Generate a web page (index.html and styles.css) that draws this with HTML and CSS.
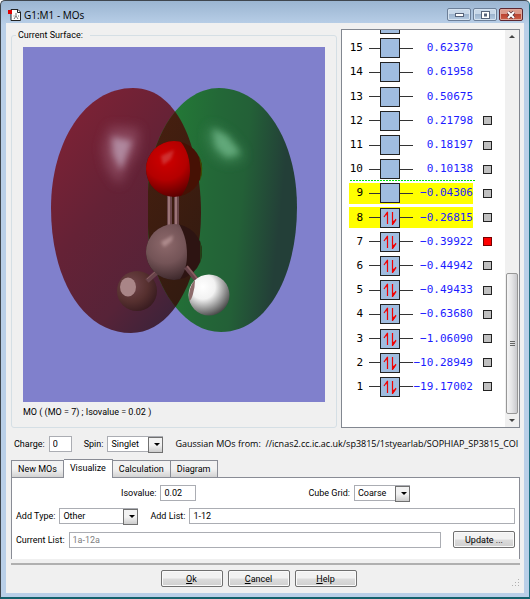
FILE: index.html
```html
<!DOCTYPE html>
<html lang="en">
<head>
    <meta charset="utf-8">
    <meta name="viewport" content="width=device-width, initial-scale=1.0">
    <title>G1:M1 - MOs</title>
    <link rel="stylesheet" href="styles.css">
</head>
<body>
<div class="window">
    <header class="titlebar">
        <svg class="app-icon" width="14" height="14" viewBox="0 0 14 14" aria-hidden="true">
            <path d="M3 1.500h7l2.500 2.500v8.500H3z" fill="#fff" stroke="#222"/>
            <path d="M9.500 1.500v3h3" fill="none" stroke="#222"/>
            <path d="M8 5v3M8 8l-2 3M8 8l2 3M5.500 8h1M10 8h1" stroke="#777" fill="none"/>
            <rect x="0" y="2" width="4" height="4" fill="#e00000"/>
        </svg>
        <h1>G1:M1 - MOs</h1>
        <div class="window-buttons">
            <button type="button" aria-label="Minimize">
                <svg width="9" height="5" viewBox="0 0 9 5"><rect x=".5" y="1.500" width="8" height="3" fill="#fff" stroke="#56637a"/></svg>
            </button>
            <button type="button" aria-label="Maximize">
                <svg width="9" height="8" viewBox="0 0 9 8"><rect x=".5" y=".5" width="8" height="7" fill="#fff" stroke="#56637a"/><rect x="3.500" y="3" width="2" height="2" fill="#9fb5cf" stroke="#56637a"/></svg>
            </button>
            <button type="button" class="close" aria-label="Close">
                <svg width="10" height="8" viewBox="0 0 10 8"><path d="M2 1l6 6M8 1l-6 6" stroke="#5b3038" stroke-width="3.400"/><path d="M2 1l6 6M8 1l-6 6" stroke="#fff" stroke-width="2"/></svg>
            </button>
        </div>
    </header>

    <main class="client">
        <div class="top">
            <fieldset class="surface">
                <legend>Current Surface:</legend>
                <svg class="canvas" viewBox="0 0 302 355" role="img" aria-label="Orbital surface">
                    <defs>
                        <linearGradient id="redLobe" x1=".1" y1=".1" x2=".75" y2="1">
                            <stop offset="0" stop-color="#7d2235"/>
                            <stop offset=".4" stop-color="#652236"/>
                            <stop offset=".75" stop-color="#572338"/>
                            <stop offset="1" stop-color="#3b233a"/>
                        </linearGradient>
                        <linearGradient id="greenLobe" x1=".1" y1=".1" x2=".98" y2=".25">
                            <stop offset="0" stop-color="#237d36"/>
                            <stop offset=".4" stop-color="#236837"/>
                            <stop offset=".65" stop-color="#236037"/>
                            <stop offset=".95" stop-color="#233f38"/>
                        </linearGradient>
                        <linearGradient id="shared" x1="0" y1="0" x2="1" y2="1">
                            <stop offset="0" stop-color="#4a200f"/>
                            <stop offset=".5" stop-color="#351b10"/>
                            <stop offset="1" stop-color="#251a12"/>
                        </linearGradient>
                        <radialGradient id="oxygen" cx=".35" cy=".32" r=".75">
                            <stop offset="0" stop-color="#d00000"/>
                            <stop offset=".5" stop-color="#b40000"/>
                            <stop offset="1" stop-color="#4c0000"/>
                        </radialGradient>
                        <radialGradient id="carbon" cx=".35" cy=".35" r=".7">
                            <stop offset="0" stop-color="#8d696b"/>
                            <stop offset=".5" stop-color="#745457"/>
                            <stop offset="1" stop-color="#392528"/>
                        </radialGradient>
                        <radialGradient id="hydrogenLeft" cx=".35" cy=".35" r=".7">
                            <stop offset="0" stop-color="#71464b"/>
                            <stop offset=".6" stop-color="#56302f"/>
                            <stop offset="1" stop-color="#391c20"/>
                        </radialGradient>
                        <radialGradient id="hydrogenRight" cx=".35" cy=".3" r=".75">
                            <stop offset="0" stop-color="#ffffff"/>
                            <stop offset=".4" stop-color="#f2f2f2"/>
                            <stop offset="1" stop-color="#464646"/>
                        </radialGradient>
                        <clipPath id="redClip"><path d="M110 41C158 41 178 108 178 166C178 230 150 286 108 286C60 286 28 232 28 161C28 95 62 41 110 41Z"/></clipPath>
                        <clipPath id="oxygenClip"><path d="M110 85H149C162 97 167 108 167 124C167 138 159 148 156 152H110Z"/></clipPath>
                        <clipPath id="carbonClip"><path d="M110 170H152C161 184 164 194 164 208C164 222 159 231 151 240H110Z"/></clipPath>
                        <filter id="soft" x="-50%" y="-50%" width="200%" height="200%"><feGaussianBlur stdDeviation="6"/></filter>
                        <filter id="softer" x="-50%" y="-50%" width="200%" height="200%"><feGaussianBlur stdDeviation="3"/></filter>
                        <filter id="glint" x="-50%" y="-50%" width="200%" height="200%"><feGaussianBlur stdDeviation="1.500"/></filter>
                    </defs>
                    <rect width="302" height="355" fill="#8080cc"/>
                    <!-- lobes -->
                    <path d="M110 41C158 41 178 108 178 166C178 230 150 286 108 286C60 286 28 232 28 161C28 95 62 41 110 41Z" fill="url(#redLobe)"/>
                    <path d="M196 41C240 41 274 92 274 160C274 232 242 285 198 285C154 285 125 225 125 180V145C125 95 155 41 196 41Z" fill="url(#greenLobe)"/>
                    <g clip-path="url(#redClip)">
                        <path d="M196 41C240 41 274 92 274 160C274 232 242 285 198 285C154 285 125 225 125 180V145C125 95 155 41 196 41Z" fill="url(#shared)"/>
                    </g>
                    <path d="M87 80L116 82L114 103L104 121L96 138L84 120L80 100Z" fill="#96566d" opacity=".7" filter="url(#soft)"/>
                    <path d="M89 90L109 94L104 108L98 123L90 107Z" fill="#b998ae" opacity=".8" filter="url(#softer)"/>
                    <path d="M188 78L205 88L218 103L220 112L203 115L192 108L184 90Z" fill="#468f5d" opacity=".8" filter="url(#soft)"/>
                    <path d="M190 82L204 89L217 106L204 110L193 100Z" fill="#6bb183" opacity=".8" filter="url(#softer)"/>
                    <!-- molecule -->
                    <circle cx="151" cy="122" r="28" fill="#461104"/>
                    <path d="M176 109Q182 121 177 134L178 122Z" fill="#3e4b04"/>
                    <circle cx="151" cy="205" r="28" fill="#2d1412"/>
                    <path d="M177 194Q181 205 177 216Z" fill="#243e16"/>
                    <path d="M146.500 148v30M153.500 148v30" stroke="#6a4549" stroke-width="5"/>
                    <path d="M146 148v30M153 148v30" stroke="#ad8587" stroke-width="1.500"/>
                    <g clip-path="url(#oxygenClip)"><circle cx="151" cy="122" r="28" fill="url(#oxygen)"/></g>
                    <path d="M138 109L151 103L148 112L140 118Z" fill="#d05050" opacity=".6" filter="url(#glint)"/>
                    <circle cx="114" cy="244" r="20" fill="url(#hydrogenLeft)"/>
                    <ellipse cx="105" cy="240" rx="8" ry="9.500" fill="#a98587"/>
                    <path d="M124 234l10-9" stroke="#67434a" stroke-width="5"/>
                    <path d="M124 232l9-8" stroke="#8b6062" stroke-width="1"/>
                    <g clip-path="url(#carbonClip)"><circle cx="151" cy="205" r="28" fill="url(#carbon)"/></g>
                    <path d="M138 195L150 188L149 194L141 200Z" fill="#c5a2a3" opacity=".6" filter="url(#glint)"/>
                    <path d="M163 220l14 17" stroke="#67434a" stroke-width="5"/>
                    <path d="M164 219l13 16" stroke="#8b6062" stroke-width="1.500"/>
                    <circle cx="186" cy="248" r="20.500" fill="url(#hydrogenRight)"/>
                    <path d="M172 233Q165 240 166 254Q168 254 170 247Q172 240 172 233Z" fill="#8d6c6c"/>
                </svg>
                <p class="caption">MO ( (MO = 7) ; Isovalue = 0.02 )</p>
            </fieldset>

            <section class="mo-list" aria-label="Molecular orbitals">
                <div class="levels" id="levels"></div>
                <div class="scrollbar" aria-hidden="true">
                    <span class="arrow-up"></span>
                    <span class="thumb"><i></i><i></i><i></i></span>
                    <span class="arrow-down"></span>
                </div>
            </section>
        </div>

        <div class="row status">
            <label for="charge">Charge:</label>
            <input type="text" id="charge" class="charge" value="0">
            <label for="spin" class="second">Spin:</label>
            <span class="select small">
                <select id="spin"><option>Singlet</option></select>
            </span>
            <span class="path">Gaussian MOs from:&nbsp; //icnas2.cc.ic.ac.uk/sp3815/1styearlab/SOPHIAP_SP3815_COI</span>
        </div>

        <div class="tabs" role="tablist">
            <button type="button" role="tab">New MOs</button>
            <button type="button" role="tab" class="active" aria-selected="true">Visualize</button>
            <button type="button" role="tab">Calculation</button>
            <button type="button" role="tab">Diagram</button>
        </div>
        <div class="tab-panel" role="tabpanel">
            <div class="row centered">
                <div class="row">
                    <label for="isovalue">Isovalue:</label>
                    <input type="text" id="isovalue" class="isovalue" value="0.02">
                </div>
                <div class="row">
                    <label for="cube-grid">Cube Grid:</label>
                    <span class="select small">
                        <select id="cube-grid"><option>Coarse</option></select>
                    </span>
                </div>
            </div>
            <div class="row">
                <label for="add-type">Add Type:</label>
                <span class="select medium">
                    <select id="add-type"><option>Other</option></select>
                </span>
                <label for="add-list" class="second">Add List:</label>
                <input type="text" id="add-list" class="grow" value="1-12">
            </div>
            <div class="row">
                <label for="current-list">Current List:</label>
                <input type="text" id="current-list" class="grow" value="1a-12a" disabled>
                <button type="button" class="push update">Update ...</button>
            </div>
        </div>

        <footer class="actions">
            <div class="action-buttons">
                <button type="button" class="push"><u>O</u>k</button>
                <button type="button" class="push"><u>C</u>ancel</button>
                <button type="button" class="push"><u>H</u>elp</button>
            </div>
            <svg class="grip" width="8" height="8" viewBox="0 0 8 8" aria-hidden="true">
                <path d="M6 0h1v1h-1zM3 3h1v1h-1zM6 3h1v1h-1zM0 6h1v1h-1zM3 6h1v1h-1zM6 6h1v1h-1z" fill="#b0b0b0"/>
            </svg>
        </footer>
    </main>
</div>
<script src="main.js"></script>
</body>
</html>
```

FILE: styles.css
```css
* { box-sizing: border-box; }

body {
    margin: 0;
    font-family: Roboto, "Liberation Sans", sans-serif;
    font-size: 9px;
    line-height: 12px;
    color: #000;
}
button, input, select { font: inherit; color: inherit; margin: 0; }

.window {
    min-height: 100vh;
    display: flex;
    flex-direction: column;
    padding: 0 5px 4px;
    background: linear-gradient(#9bb5d1, #b9cfe8 24px);
    border: 1px solid #3f464e;
    border-right-color: #1b6f80;
    border-bottom: 2px solid #14616c;
    border-radius: 5px 5px 0 0;
}

/* Title bar */
.titlebar {
    display: flex;
    align-items: center;
    height: 22px;
    padding: 5px 1px 0 2px;
}
.titlebar h1 {
    flex: 1;
    margin: 0 0 0 2px;
    font: 10px/16px "Open Sans", "Noto Sans", sans-serif;
}
.window-buttons { display: flex; gap: 2px; }
.window-buttons button {
    display: flex;
    align-items: center;
    justify-content: center;
    width: 24px;
    height: 13px;
    padding: 0;
    border: 1px solid #6c7f98;
    border-radius: 2px;
    background: linear-gradient(#c8d8e9 45%, #9db4ce 50%, #b5cbe2);
    box-shadow: inset 0 0 0 1px #d6e3f0;
}
.window-buttons .close {
    border-color: #5d2730;
    background: linear-gradient(#dc9a8b 45%, #bb4432 50%, #cd6048);
    box-shadow: inset 0 0 0 1px #e0a79b;
}

/* Client area */
.client {
    flex: 1;
    padding: 6px 4px 0 5px;
    background: #f0f0f0;
}
.top {
    display: grid;
    grid-template-columns: minmax(0, 1fr) 179px;
    gap: 4px;
}
.surface {
    min-width: 0;
    margin: 0;
    padding: 6px 11px 9px;
    border: 1px solid #d5dfe5;
    border-radius: 3px;
}
.surface legend {
    margin-left: -7px;
    padding: 0 7px 0 2px;
}
.canvas { display: block; width: 100%; }
.caption { margin: 4px 0 0; }

.mo-list {
    display: flex;
    min-height: 0;
    overflow: hidden;
    background: #fff;
    border: 1px solid #828790;
}
.levels {
    flex: 1;
    display: flex;
    flex-direction: column;
    margin-top: -18px;
    padding: 0 0 28px 7px;
    font: 11px/20px "DejaVu Sans Mono", monospace;
}
.level-row {
    position: relative;
    flex: 1;
    display: flex;
    align-items: center;
    gap: 10px;
}
.level {
    display: flex;
    align-items: center;
    width: 124px;
    height: 21px;
}
.level.highlight { background: #ff0; }
.level-row.gap-line::after {
    content: "";
    position: absolute;
    left: 1px;
    bottom: 0;
    width: 126px;
    height: 1px;
    background: repeating-linear-gradient(90deg, #00e000 0 2px, #fff 2px 3px);
}
.number { width: 14px; text-align: right; }
.line { width: 11px; height: 1px; background: #333; }
.number + .line { margin-left: 6px; }
.box {
    width: 20px;
    height: 20px;
    border: 1px solid #222;
    background: #a0bde0;
}
.box svg { display: block; }
.box + .line { width: 13px; }
.energy {
    flex: 1;
    display: flex;
    justify-content: flex-end;
    min-width: 0;
    color: #1c1cff;
}
.level-row input {
    appearance: none;
    width: 9px;
    height: 9px;
    border: 1px solid #222;
    background: #c0c0c0;
}
.level-row input:checked { background: #f00; border-color: #700; }

.scrollbar {
    display: flex;
    flex-direction: column;
    align-items: center;
    width: 14px;
    padding: 5px 1px;
    background: #f0f0f0;
}
.arrow-up, .arrow-down {
    border: 3px solid transparent;
    border-top: 0;
    border-bottom-color: #444;
}
.arrow-down {
    border-top: 3px solid #444;
    border-bottom: 0;
    margin-top: 5px;
}
.thumb {
    display: flex;
    flex-direction: column;
    align-items: center;
    justify-content: center;
    gap: 1px;
    width: 12px;
    height: 141px;
    margin-top: auto;
    border: 1px solid #979797;
    border-radius: 2px;
    background: linear-gradient(90deg, #f5f5f5, #e4e4e6 50%, #c9c9cd);
}
.thumb i { width: 5px; height: 1px; background: #666; }

/* Form controls */
.row { display: flex; align-items: center; }
.row label { white-space: nowrap; margin-right: 4px; }
.row .second { margin-left: 12px; }
input[type="text"], select {
    height: 16px;
    padding: 0 3px;
    border: 1px solid #abadb3;
    border-radius: 0;
    background: #fff;
}
input:disabled { color: #808080; }
.charge { width: 23px; }
.isovalue { width: 36px; }
.grow { flex: 1; min-width: 0; }
.select { position: relative; display: flex; }
.select select { appearance: none; width: 100%; }
.select::before {
    content: "";
    position: absolute;
    right: 0;
    top: 1px;
    width: 13px;
    height: 14px;
    border: 1px solid #707070;
    background: linear-gradient(#f2f2f2 50%, #ccc);
    pointer-events: none;
}
.select::after {
    content: "";
    position: absolute;
    right: 3px;
    top: 7px;
    border: 3px solid transparent;
    border-top-color: #000;
    border-bottom: 0;
    pointer-events: none;
}
.small { width: 56px; }
.medium { width: 79px; }

.status { padding: 8px 0 0 3px; }
.path {
    flex: 1;
    min-width: 0;
    margin-left: 12px;
    overflow: hidden;
    white-space: nowrap;
    font: 9px/16px "Open Sans", "Noto Sans", sans-serif;
}

/* Tabs */
.tabs {
    display: flex;
    align-items: flex-end;
    margin-top: 7px;
}
.tabs button {
    height: 17px;
    padding: 0 6px;
    border: 1px solid #898c95;
    border-left-width: 0;
    border-bottom: 0;
    background: linear-gradient(#f2f2f2 50%, #d2d2d2);
}
.tabs button:first-child { border-left-width: 1px; }
.tabs .active {
    position: relative;
    height: 19px;
    margin-bottom: -1px;
    padding-bottom: 3px;
    background: #fff;
}
.tab-panel {
    display: flex;
    flex-direction: column;
    gap: 7px;
    padding: 7px 4px 11px;
    background: #fff;
    border: 1px solid #898c95;
    border-bottom: 0;
}
.centered { justify-content: center; gap: 112px; }

.push {
    width: 62px;
    height: 17px;
    padding: 0;
    border: 1px solid #707070;
    border-radius: 2px;
    background: linear-gradient(#f2f2f2 48%, #dcdcdc 52%, #cfcfcf);
    box-shadow: inset 0 0 0 1px #fafafa;
}
.update { margin-left: 12px; }

/* Footer */
.actions {
    display: flex;
    align-items: center;
    margin-top: 4px;
    padding: 5px 0;
    border-top: 2px solid #b0b0b0;
}
.action-buttons {
    flex: 1;
    display: flex;
    justify-content: center;
    gap: 5px;
}
.grip { align-self: flex-end; margin-left: 6px; }
```

FILE: main.js
```js
// energy levels, highest first; the top one is scrolled out except for its box
const levels = [
    ['', ''],
    [15, '0.62370'],
    [14, '0.61958'],
    [13, '0.50675'],
    [12, '0.21798'],
    [11, '0.18197'],
    [10, '0.10138'],
    [9, '−0.04306'],
    [8, '−0.26815'],
    [7, '−0.39922'],
    [6, '−0.44942'],
    [5, '−0.49433'],
    [4, '−0.63680'],
    [3, '−1.06090'],
    [2, '−10.28949'],
    [1, '−19.17002'],
];

const electrons = `<svg width="18" height="18" viewBox="0 0 18 18">
    <path d="M6.500 15V3M6.500 3L3 8" stroke="#f00000" fill="none" stroke-width="1.200"/>
    <path d="M5 6l2-4v5z" fill="#f00000"/>
    <path d="M11.500 3v13M12 15l3-5" stroke="#f00000" fill="none" stroke-width="1.200"/>
    <path d="M11.500 16l4-5-4 1z" fill="#f00000"/>
</svg>`;

document.getElementById('levels').innerHTML = levels.map(([n, energy]) => `
    <div class="level-row ${n === 10 ? 'gap-line' : ''}">
        <div class="level ${n === 8 || n === 9 ? 'highlight' : ''}">
            <span class="number">${n}</span>
            <span class="line"></span>
            <span class="box">${n && n <= 8 ? electrons : ''}</span>
            <span class="line"></span>
            <span class="energy">${energy}</span>
        </div>
        ${n && n <= 12 ? `<input type="checkbox" aria-label="MO ${n}" ${n === 7 ? 'checked' : ''}>` : ''}
    </div>`).join('');
```
